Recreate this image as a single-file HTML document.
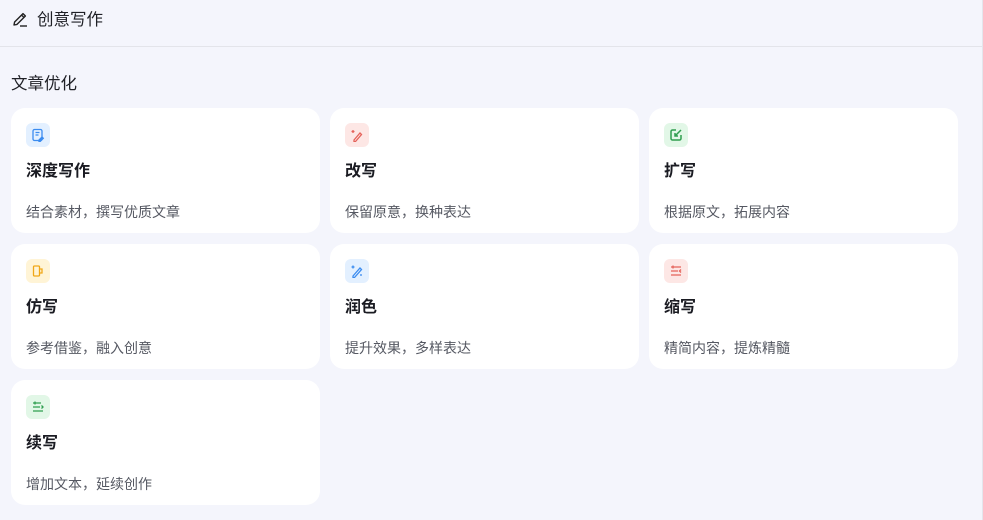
<!DOCTYPE html>
<html><head><meta charset="utf-8"><style>
*{margin:0;padding:0;box-sizing:border-box}
body{width:983px;height:520px;background:#f4f5fc;font-family:"Liberation Sans","Noto Sans CJK SC",sans-serif;position:relative;overflow:hidden;border-right:1px solid #e4e5ec}
.hd{height:47px;border-bottom:1px solid #e3e4ea;display:flex;align-items:flex-start;padding-left:12px;padding-top:9px;font-size:16.5px;line-height:22px;color:#1f2026}
.hd svg{margin-right:8px;margin-top:2px}
.sec{position:absolute;left:11px;top:73px;font-size:16.5px;line-height:22px;color:#1f2026}
.card{position:absolute;width:309px;height:125px;background:#fff;border-radius:14px}
.ic{position:absolute;left:15px;top:15px;width:24px;height:24px;border-radius:6px;display:flex;align-items:center;justify-content:center}
.t{position:absolute;left:15px;top:53px;font-size:16px;line-height:22px;font-weight:bold;color:#1a1b22}
.d{position:absolute;left:15px;top:93px;font-size:14px;line-height:22px;color:#555862}
</style></head><body>
<div class="hd"><svg width="17" height="17" viewBox="0 0 17 17" fill="none" stroke="#222" stroke-width="1.4" stroke-linejoin="round"><path d="M2 14l.6-3L11 2.6l2.4 2.4L5 13.4z"/><path d="M9.5 4l2.4 2.4"/><path d="M8 15h7"/></svg>创意写作</div>
<div class="sec">文章优化</div>

<div class="card" style="left:11px;top:108px"><div class="ic" style="background:#e3f0ff"><svg width="14" height="14" viewBox="0 0 14 14" fill="none" stroke="#3b8cf0" stroke-width="1.3"><rect x="2" y="1.5" width="9" height="11" rx="1.5"/><path d="M4.5 4.5h4M4.5 7h3"/><path d="M8 12l3-3 1.3 1.3-3 3H8z" fill="#3b8cf0"/></svg></div><div class="t">深度写作</div><div class="d">结合素材，撰写优质文章</div></div>

<div class="card" style="left:330px;top:108px"><div class="ic" style="background:#fde7e5"><svg width="14" height="14" viewBox="0 0 14 14" fill="none" stroke="#e5625a" stroke-width="1.3"><path d="M4 12l6-7 1.5 1.5-6 7H4z"/><path d="M3 2v3M1.5 3.5h3"/></svg></div><div class="t">改写</div><div class="d">保留原意，换种表达</div></div>

<div class="card" style="left:649px;top:108px"><div class="ic" style="background:#e2f7e7"><svg width="14" height="14" viewBox="0 0 14 14" fill="none" stroke="#2f9e4f" stroke-width="1.5"><path d="M7 2H3.5A1.5 1.5 0 0 0 2 3.5v7A1.5 1.5 0 0 0 3.5 12h7a1.5 1.5 0 0 0 1.5-1.5V7"/><path d="M12 2L6 8M6 5v3h3"/></svg></div><div class="t">扩写</div><div class="d">根据原文，拓展内容</div></div>

<div class="card" style="left:11px;top:244px"><div class="ic" style="background:#fff4d6"><svg width="14" height="14" viewBox="0 0 14 14" fill="none" stroke="#f0a818" stroke-width="1.3"><rect x="2.5" y="2" width="6" height="10" rx="1"/><path d="M8.5 5h2.5v4H8.5"/></svg></div><div class="t">仿写</div><div class="d">参考借鉴，融入创意</div></div>

<div class="card" style="left:330px;top:244px"><div class="ic" style="background:#e3f0ff"><svg width="14" height="14" viewBox="0 0 14 14" fill="none" stroke="#3b8cf0" stroke-width="1.3"><path d="M3 12l7-8 1.5 1.5-7 8H3z"/><path d="M3 1.5v3M1.5 3h3M11 10v2"/></svg></div><div class="t">润色</div><div class="d">提升效果，多样表达</div></div>

<div class="card" style="left:649px;top:244px"><div class="ic" style="background:#fde7e5"><svg width="14" height="14" viewBox="0 0 14 14" fill="none" stroke="#e5625a" stroke-width="1.3"><path d="M2 3h10M2 7h7M2 11h10M12 5.5L10.5 7 12 8.5M4 1.5v3"/></svg></div><div class="t">缩写</div><div class="d">精简内容，提炼精髓</div></div>

<div class="card" style="left:11px;top:380px"><div class="ic" style="background:#e2f7e7"><svg width="14" height="14" viewBox="0 0 14 14" fill="none" stroke="#2f9e4f" stroke-width="1.3"><path d="M2 3h8M2 7h7M2 11h10M10.5 5.5L12 7l-1.5 1.5M4 1.5v3"/></svg></div><div class="t">续写</div><div class="d">增加文本，延续创作</div></div>
</body></html>
